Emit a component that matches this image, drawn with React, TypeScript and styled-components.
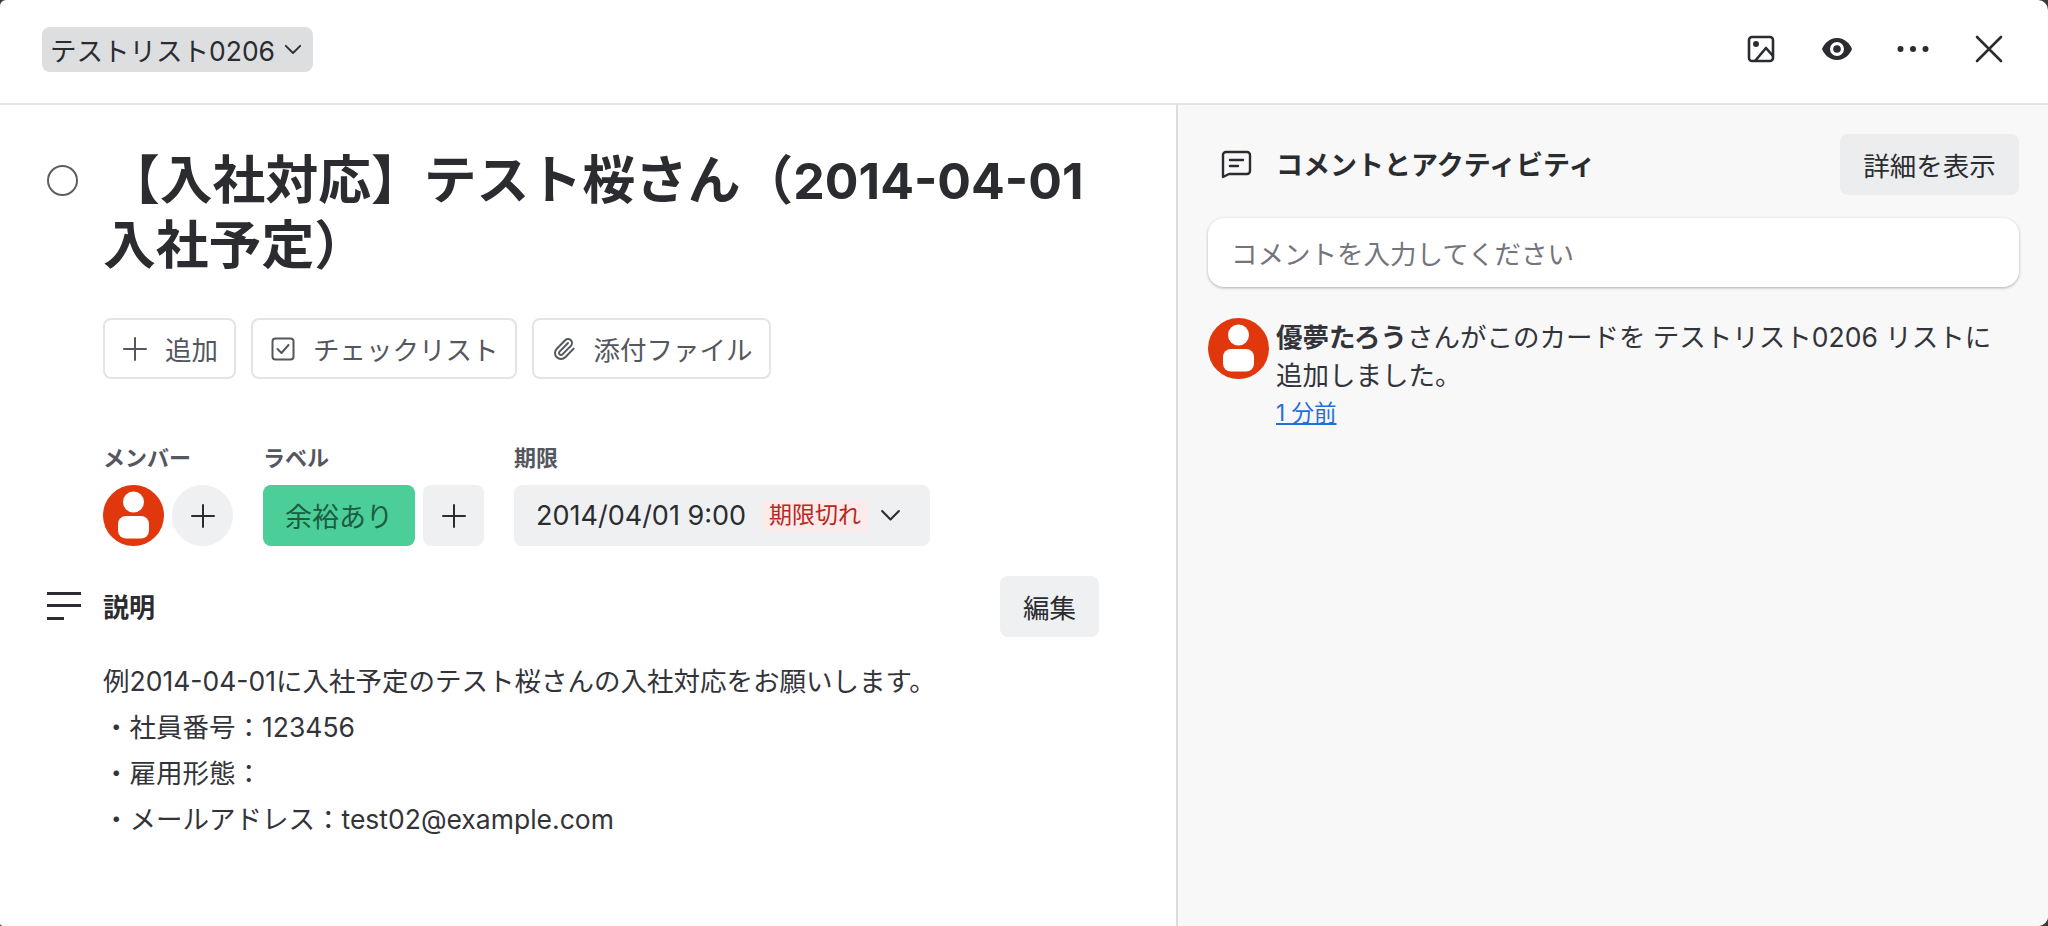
import React from "react";
import styled, { createGlobalStyle } from "styled-components";
import { Paperclip } from "lucide-react";

const Global = createGlobalStyle`
  html, body { margin: 0; padding: 0; background: #3a3a3c; }
  body { font-family: Inter, "Noto Sans CJK JP", sans-serif; color: #2b2c30; }
  * { box-sizing: border-box; }
`;

const Modal = styled.div`
  width: 2048px; height: 926px; display: flex; flex-direction: column; overflow: hidden;
  background: #fff; border-radius: 6px 10px 10px 3px;
`;
const Header = styled.header`
  height: 105px; flex: none; display: flex; align-items: center; justify-content: space-between;
  padding: 0 42px 5px 42px; border-bottom: 2px solid #e3e4e6;
`;
const ListPicker = styled.div`
  display: flex; align-items: center; gap: 9px; height: 45px; padding: 0 11px 0 8px;
  background: #dddee0; border-radius: 8px; font-size: 26.5px;
`;
const HeaderIcons = styled.div`display: flex; align-items: center; gap: 41px;`;
const IconBox = styled.span`width: 35px; height: 35px; display: flex; align-items: center; justify-content: center; color: #2b2c30;`;
const Body = styled.div`flex: 1; display: flex; min-height: 0;`;
const Main = styled.main`width: 1176px; flex: none; padding: 43px 77px 0 47px;`;
const TitleRow = styled.div`display: flex; gap: 25px;`;
const Circle = styled.span`
  width: 31px; height: 31px; flex: none; margin-top: 17px; border-radius: 50%; border: 2.5px solid #5c5e66;
`;
const Title = styled.h1`
  margin: 0; font-size: 52.8px; line-height: 64px; font-weight: 700; text-indent: 4px; width: 1010px; color: #2b2c30;
`;
const TitleDigits = styled.span`font-size: 50px;`;
const Actions = styled.div`display: flex; gap: 15px; margin: 41px 0 0 56px;`;
const ActionButton = styled.div`
  height: 61px; display: flex; align-items: center; gap: 18px; padding: 0 16px 0 18px;
  border: 2px solid #e3e4e6; border-radius: 8px; font-size: 26.5px; color: #55575f;
`;
const Fields = styled.div`display: flex; gap: 30px; margin: 64px 0 0 56px;`;
const Field = styled.div`display: flex; flex-direction: column; gap: 12px;`;
const FieldLabel = styled.div`font-size: 22px; line-height: 30px; font-weight: 700; color: #55575f;`;
const FieldRow = styled.div`display: flex; gap: 8px; height: 61px;`;
const Avatar = styled.span`
  width: 61px; height: 61px; flex: none; border-radius: 50%; background: #e0380c; display: flex; align-items: center; justify-content: center;
`;
const AddRound = styled.span`
  width: 61px; height: 61px; border-radius: 50%; background: #eff0f2; display: flex; align-items: center; justify-content: center;
`;
const AddSquare = styled(AddRound)`border-radius: 8px;`;
const LabelChip = styled.div`
  width: 152px; height: 61px; border-radius: 8px; background: #4cce99; color: #1d5c43; font-size: 27px;
  display: flex; align-items: center; justify-content: center;
`;
const DueBox = styled.div`
  width: 416px; height: 61px; border-radius: 8px; background: #eff0f2; padding: 0 21px 0 22px;
  display: flex; align-items: center; font-size: 27px; white-space: nowrap;
`;
const Overdue = styled.span`
  margin-left: 16px; margin-right: 12px; padding: 0 7px; height: 31px; border-radius: 4px; background: #fdeaea; color: #b52a22;
  font-size: 23px; line-height: 31px;
`;
const DescHead = styled.div`
  display: flex; align-items: center; gap: 22px; margin-top: 30px; height: 61px;
`;
const DescIcon = styled.svg`margin-bottom: 2px;`;
const DescTitle = styled.div`font-size: 26px; font-weight: 700; flex: 1; margin-bottom: 2px;`;
const EditButton = styled.div`
  height: 61px; width: 99px; border-radius: 8px; background: #eff0f2; display: flex; align-items: center; justify-content: center; font-size: 26.5px;
`;
const DescText = styled.div`margin: 21px 0 0 56px; font-size: 26.5px; line-height: 46px; color: #33343a;`;
const Side = styled.aside`
  flex: 1; background: #f8f8f8; border-left: 2px solid #dcdddf; padding: 29px 29px 0 30px;
`;
const SideHead = styled.div`display: flex; align-items: center; height: 61px;`;
const CommentIcon = styled.svg`margin-left: 13px;`;
const SideTitle = styled.div`font-size: 27px; font-weight: 700; flex: 1; margin: 0 0 2px 24px; color: #2b2c30;`;
const DetailButton = styled(EditButton)`width: 179px; background: #ecedee;`;
const CommentInput = styled.div`
  margin-top: 23px; height: 69px; background: #fff; border-radius: 16px; box-shadow: 0 1px 3px rgba(0,0,0,.3);
  display: flex; align-items: center; padding: 0 23px; font-size: 26.5px; color: #73757d;
`;
const Activity = styled.div`display: flex; gap: 7px; margin-top: 31px;`;
const ActivityText = styled.div`font-size: 26.5px; line-height: 38px; color: #33343a; width: 724px;`;
const Strong = styled.strong`font-weight: 700;`;
const TimeLink = styled.a`display: block; color: #1f6fdc; font-size: 22.5px; line-height: 38px; text-decoration: underline;`;

const Plus = ({ size = 28, color = "#2b2c30" }: { size?: number; color?: string }) => (
  <svg width={size} height={size} viewBox="0 0 24 24" fill="none" stroke={color} strokeWidth="2" strokeLinecap="round"><path d="M12 1v22M1 12h22" /></svg>
);
const Chevron = ({ size = 20 }: { size?: number }) => (
  <svg width={size} height={size * 0.6} viewBox="0 0 20 12" fill="none" stroke="#2b2c30" strokeWidth="2" strokeLinecap="round" strokeLinejoin="round"><path d="M2 2l8 8 8-8" /></svg>
);
const Person = () => (
  <svg width="61" height="61" viewBox="0 0 61 61"><circle cx="30.5" cy="17" r="10.500" fill="#fff" /><rect x="15" y="31" width="31" height="22.500" rx="8" fill="#fff" /></svg>
);

export default function App() {
  return (
    <Modal>
      <Global />
      <Header>
        <ListPicker>テストリスト0206<Chevron size={18} /></ListPicker>
        <HeaderIcons>
          <IconBox>
            <svg width="28" height="28" viewBox="0 0 28 28" fill="none" stroke="#2b2c30" strokeWidth="2.6" strokeLinejoin="round"><rect x="2" y="2" width="24" height="24" rx="3" /><path d="M8 26L19 13l7 8" /><circle cx="9" cy="9" r="3" fill="#2b2c30" stroke="none" /></svg>
          </IconBox>
          <IconBox>
            <svg width="32" height="24" viewBox="0 0 32 24"><path fillRule="evenodd" fill="#2b2c30" d="M16 1C8 1 3 7 1 12c2 5 7 11 15 11s13-6 15-11C29 7 24 1 16 1zm0 4a7 7 0 1 1 0 14 7 7 0 0 1 0-14z" /><circle cx="16" cy="12" r="3.8" fill="#2b2c30" /></svg>
          </IconBox>
          <IconBox>
            <svg width="32" height="8" viewBox="0 0 32 8" fill="#2b2c30"><circle cx="3.5" cy="4" r="3" /><circle cx="16" cy="4" r="3" /><circle cx="28.5" cy="4" r="3" /></svg>
          </IconBox>
          <IconBox>
            <svg width="28" height="28" viewBox="0 0 28 28" fill="none" stroke="#2b2c30" strokeWidth="2.6" strokeLinecap="round"><path d="M2 2l24 24M26 2L2 26" /></svg>
          </IconBox>
        </HeaderIcons>
      </Header>
      <Body>
        <Main>
          <TitleRow>
            <Circle />
            <Title>【入社対応】テスト桜さん（<TitleDigits>2014-04-01</TitleDigits><br />入社予定）</Title>
          </TitleRow>
          <Actions>
            <ActionButton><Plus size={24} color="#55575f" />追加</ActionButton>
            <ActionButton>
              <svg width="24" height="24" viewBox="0 0 24 24" fill="none" stroke="#55575f" strokeWidth="2" strokeLinecap="round" strokeLinejoin="round"><rect x="1.5" y="1.5" width="21" height="21" rx="3" /><path d="M6.5 12l4 4 7-8" /></svg>
              チェックリスト
            </ActionButton>
            <ActionButton>
              <Paperclip size={24} color="#55575f" strokeWidth={2} />
              添付ファイル
            </ActionButton>
          </Actions>
          <Fields>
            <Field>
              <FieldLabel>メンバー</FieldLabel>
              <FieldRow><Avatar><Person /></Avatar><AddRound><Plus size={24} /></AddRound></FieldRow>
            </Field>
            <Field>
              <FieldLabel>ラベル</FieldLabel>
              <FieldRow><LabelChip>余裕あり</LabelChip><AddSquare><Plus size={24} /></AddSquare></FieldRow>
            </Field>
            <Field>
              <FieldLabel>期限</FieldLabel>
              <DueBox>2014/04/01 9:00<Overdue>期限切れ</Overdue><Chevron size={21} /></DueBox>
            </Field>
          </Fields>
          <DescHead>
            <DescIcon width="34" height="30" viewBox="0 0 34 30" fill="#2b2c30"><rect y="1" width="34" height="3" /><rect y="13" width="34" height="3" /><rect y="26" width="17" height="3" /></DescIcon>
            <DescTitle>説明</DescTitle>
            <EditButton>編集</EditButton>
          </DescHead>
          <DescText>
            例2014-04-01に入社予定のテスト桜さんの入社対応をお願いします。<br />
            ・社員番号：123456<br />
            ・雇用形態：<br />
            ・メールアドレス：test02@example.com
          </DescText>
        </Main>
        <Side>
          <SideHead>
            <CommentIcon width="31" height="30" viewBox="0 0 31 30" fill="none" stroke="#2b2c30" strokeWidth="2.4" strokeLinecap="round" strokeLinejoin="round"><path d="M2 27V5a3 3 0 0 1 3-3h21a3 3 0 0 1 3 3v16a3 3 0 0 1-3 3H8z" /><path d="M9 10h13M9 16h8" /></CommentIcon>
            <SideTitle>コメントとアクティビティ</SideTitle>
            <DetailButton>詳細を表示</DetailButton>
          </SideHead>
          <CommentInput>コメントを入力してください</CommentInput>
          <Activity>
            <Avatar><Person /></Avatar>
            <ActivityText>
              <Strong>優夢たろう</Strong>さんがこのカードを テストリスト0206 リストに追加しました。
              <TimeLink href="#">1 分前</TimeLink>
            </ActivityText>
          </Activity>
        </Side>
      </Body>
    </Modal>
  );
}
